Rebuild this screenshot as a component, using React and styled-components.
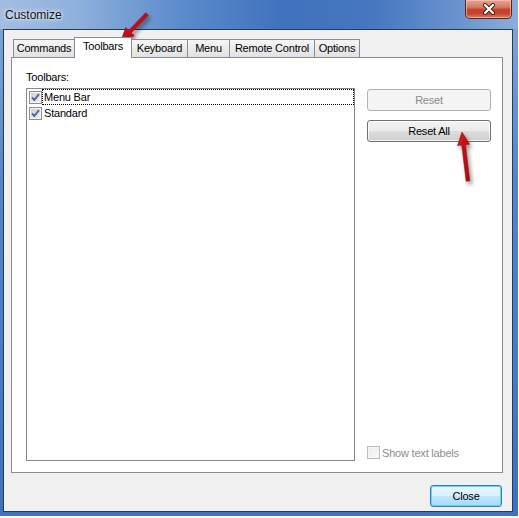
import React from 'react';
import styled, { createGlobalStyle } from 'styled-components';

const GlobalStyle = createGlobalStyle`
  body {
    margin: 0;
    background: #fff;
    font-family: "Liberation Sans", Arial, sans-serif;
  }
`;

const Window = styled.div`
  position: relative;
  width: 518px;
  height: 516px;
  display: flex;
  flex-direction: column;
  background: linear-gradient(180deg, #86a8d8 0%, #5584c6 35%, #3f72bd 100%);
`;

const TitleBar = styled.div`
  height: 29px;
  flex: none;
  display: flex;
  align-items: flex-start;
  justify-content: space-between;
  padding-left: 5px;
  background: linear-gradient(90deg, #a2bde2 0%, #8eb0dc 15%, #5b8bcb 35%, #3f72be 55%, #4677c0 72%, #6e96cf 90%, #8eaeda 100%);
`;

const Title = styled.div`
  margin-top: 8px;
  font-size: 12px;
  line-height: 14px;
  color: #111;
  text-shadow: 0 0 6px rgba(255, 255, 255, 0.9), 0 0 3px rgba(255, 255, 255, 0.9);
`;

const CloseX = styled.div`
  width: 47px;
  height: 19px;
  margin-right: 6px;
  box-sizing: border-box;
  border: 1px solid #5a2418;
  border-top: none;
  border-radius: 0 0 5px 5px;
  background: linear-gradient(180deg, #e6a596 0%, #d47a66 40%, #c4402a 55%, #c5452f 75%, #e07b5f 100%);
  box-shadow: inset 0 0 0 1px rgba(255, 210, 200, 0.55);
  display: flex;
  align-items: center;
  justify-content: center;
`;

const Client = styled.div`
  flex: 1;
  margin: 0 5px 4px 3px;
  border: 1px solid #213c63;
  background: #f0f0f0;
  display: flex;
  flex-direction: column;
  padding: 7px 9px 4px 7px;
  letter-spacing: -0.2px;
`;

const TabStrip = styled.div`
  display: flex;
  align-items: flex-end;
  padding-left: 2px;
  height: 21px;
  margin-bottom: -1px;
  position: relative;
  z-index: 2;
`;

const Tab = styled.div`
  box-sizing: border-box;
  width: ${p => p.$w}px;
  margin-left: ${p => (p.$first ? 0 : -1)}px;
  height: ${p => (p.$active ? 21 : 18)}px;
  margin-bottom: ${p => (p.$active ? 0 : 1)}px;
  border: 1px solid #898c95;
  border-bottom: none;
  background: ${p => (p.$active ? '#fff' : 'linear-gradient(180deg, #f6f6f6 0%, #eaeaea 55%, #e2e2e2 100%)')};
  position: relative;
  z-index: ${p => (p.$active ? 2 : 1)};
  font-size: 11px;
  color: #000;
  text-align: center;
  line-height: 17px;
  white-space: nowrap;
`;

const Panel = styled.div`
  flex: 1;
  border: 1px solid #898c95;
  background: #fff;
  display: grid;
  grid-template-columns: 329px 124px;
  column-gap: 12px;
  padding: 13px 0 11px 14px;
`;

const LeftCol = styled.div`
  display: flex;
  flex-direction: column;
`;

const Label = styled.div`
  font-size: 11px;
  line-height: 13px;
  color: #000;
  margin-bottom: 4px;
`;

const ListBox = styled.div`
  flex: 1;
  border: 1px solid #828790;
  background: #fff;
  padding-left: 2px;
`;

const ListRow = styled.div`
  display: flex;
  align-items: center;
  height: 16px;
`;

const RowText = styled.div`
  flex: 1;
  height: 16px;
  box-sizing: border-box;
  padding-left: 1px;
  font-size: 11px;
  line-height: 15px;
  color: #000;
  border: 1px dotted ${p => (p.$focus ? '#000' : 'transparent')};
`;

const RightCol = styled.div`
  display: flex;
  flex-direction: column;
  padding-top: 18px;
`;

const Button = styled.button`
  box-sizing: border-box;
  width: ${p => p.$w || 124}px;
  height: 22px;
  margin: 0 0 ${p => p.$mb || 0}px;
  padding: 0;
  border-radius: 3px;
  font-family: "Liberation Sans", Arial, sans-serif;
  font-size: 11px;
  letter-spacing: -0.2px;
  border: 1px solid ${p => (p.$disabled ? '#adb2b5' : p.$default ? '#3c7fb1' : '#707070')};
  color: ${p => (p.$disabled ? '#8a8a8a' : '#000')};
  background: ${p =>
    p.$disabled
      ? '#f4f4f4'
      : p.$default
        ? 'linear-gradient(180deg, #eaf6fd 0%, #d9f0fc 48%, #bee6fd 52%, #a7d9f5 100%)'
        : 'linear-gradient(180deg, #f2f2f2 0%, #ebebeb 48%, #dddddd 52%, #cfcfcf 100%)'};
  box-shadow: ${p =>
    p.$default ? 'inset 0 0 0 1px #5ed4f9' : p.$disabled ? 'none' : 'inset 0 0 0 1px rgba(255,255,255,0.75)'};
`;

const CheckRow = styled.div`
  margin-top: auto;
  margin-bottom: 2px;
  display: flex;
  align-items: center;
  gap: 2px;
  font-size: 11px;
  color: #8d8d8d;
`;

const Footer = styled.div`
  display: flex;
  justify-content: flex-end;
  padding: 12px 1px 0 0;
`;

const Overlay = styled.svg`
  position: absolute;
  left: 0;
  top: 0;
  pointer-events: none;
`;

function CheckBox({ checked, disabled }) {
  return (
    <svg width="13" height="13" viewBox="0 0 13 13" style={{ flex: 'none' }}>
      <defs>
        <linearGradient id={disabled ? 'cbd' : 'cb'} x1="0" y1="0" x2="1" y2="1">
          <stop offset="0" stopColor={disabled ? '#ececec' : '#cfcfcf'} />
          <stop offset="1" stopColor={disabled ? '#f8f8f8' : '#f2f2f2'} />
        </linearGradient>
      </defs>
      <rect x="0.5" y="0.5" width="12" height="12" fill="#f4f4f4" stroke={disabled ? '#bdbdbd' : '#8e8f8f'} />
      <rect x="2" y="2" width="9" height="9" fill={`url(#${disabled ? 'cbd' : 'cb'})`} />
      {checked && (
        <path d="M3 6.4 L5.4 9 L10 3.2" stroke="#4e6597" strokeWidth="1.9" fill="none" strokeLinejoin="round" />
      )}
    </svg>
  );
}

function arrow(x1, y1, x2, y2, shaft = 3.6, headLen = 13, headW = 12) {
  const dx = x2 - x1;
  const dy = y2 - y1;
  const len = Math.hypot(dx, dy);
  const ux = dx / len;
  const uy = dy / len;
  const nx = -uy;
  const ny = ux;
  const bx = x2 - ux * headLen;
  const by = y2 - uy * headLen;
  const pts = [
    [x1 + (nx * shaft) / 2, y1 + (ny * shaft) / 2],
    [bx + (nx * shaft) / 2, by + (ny * shaft) / 2],
    [bx + (nx * headW) / 2, by + (ny * headW) / 2],
    [x2, y2],
    [bx - (nx * headW) / 2, by - (ny * headW) / 2],
    [bx - (nx * shaft) / 2, by - (ny * shaft) / 2],
    [x1 - (nx * shaft) / 2, y1 - (ny * shaft) / 2],
  ];
  return pts.map(p => p.map(v => v.toFixed(1)).join(',')).join(' ');
}

const tabs = [
  { name: 'Commands', w: 62 },
  { name: 'Toolbars', w: 58, active: true },
  { name: 'Keyboard', w: 57 },
  { name: 'Menu', w: 43 },
  { name: 'Remote Control', w: 86 },
  { name: 'Options', w: 46 },
];

export default function App() {
  return (
    <>
      <GlobalStyle />
      <Window>
        <TitleBar>
          <Title>Customize</Title>
          <CloseX>
            <svg width="14" height="12" viewBox="0 0 14 12">
              <path d="M3 2 L11 10 M11 2 L3 10" stroke="#4a1a12" strokeWidth="4" strokeLinecap="round" />
              <path d="M3 2 L11 10 M11 2 L3 10" stroke="#fff" strokeWidth="2.2" strokeLinecap="round" />
            </svg>
          </CloseX>
        </TitleBar>
        <Client>
          <TabStrip>
            {tabs.map((t, i) => (
              <Tab key={t.name} $w={t.w} $first={i === 0} $active={t.active}>
                {t.name}
              </Tab>
            ))}
          </TabStrip>
          <Panel>
            <LeftCol>
              <Label>Toolbars:</Label>
              <ListBox>
                <ListRow>
                  <CheckBox checked />
                  <RowText $focus>Menu Bar</RowText>
                </ListRow>
                <ListRow>
                  <CheckBox checked />
                  <RowText>Standard</RowText>
                </ListRow>
              </ListBox>
            </LeftCol>
            <RightCol>
              <Button $disabled $mb={9}>Reset</Button>
              <Button>Reset All</Button>
              <CheckRow>
                <CheckBox disabled />
                Show text labels
              </CheckRow>
            </RightCol>
          </Panel>
          <Footer>
            <Button $default $w={72}>Close</Button>
          </Footer>
        </Client>
        <Overlay width="518" height="516" viewBox="0 0 518 516">
          <defs>
            <filter id="shadow" x="-50%" y="-50%" width="200%" height="200%">
              <feDropShadow dx="2" dy="3" stdDeviation="2" floodColor="#000" floodOpacity="0.45" />
            </filter>
            <linearGradient id="red" x1="0" y1="0" x2="1" y2="1">
              <stop offset="0" stopColor="#d8151c" />
              <stop offset="1" stopColor="#a80a10" />
            </linearGradient>
          </defs>
          <polygon points={arrow(147, 14, 121, 41)} fill="url(#red)" stroke="#8e0a0e" strokeWidth="0.6" filter="url(#shadow)" />
          <polygon points={arrow(468, 181, 462, 132)} fill="url(#red)" stroke="#8e0a0e" strokeWidth="0.6" filter="url(#shadow)" />
        </Overlay>
      </Window>
    </>
  );
}
